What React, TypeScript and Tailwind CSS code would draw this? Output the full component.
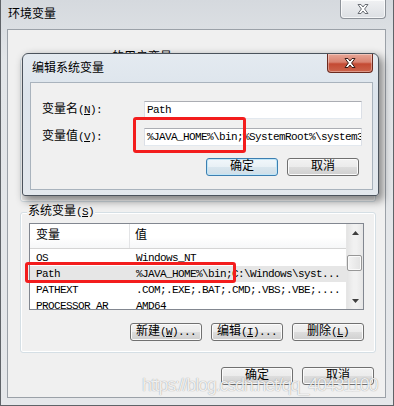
import type { ReactNode } from "react";

const UI = "font-['Liberation_Mono','Noto_Sans_CJK_SC',monospace]";

// ASCII part of SimSun-like text: 6px per char
function A({ children }: { children: ReactNode }) {
  return <span className="text-[11px] tracking-[-0.6px]">{children}</span>;
}

function XGlyph({ stroke }: { stroke: string }) {
  return (
    <svg width="12" height="10" viewBox="0 0 12 10">
      <polygon
        points="1,0.5 4,0.5 6,3 8,0.5 11,0.5 7.6,5 11,9.5 8,9.5 6,7 4,9.5 1,9.5 4.4,5"
        fill="#ffffff"
        stroke={stroke}
        strokeWidth="1"
        strokeLinejoin="round"
      />
    </svg>
  );
}

function CloseButton({ active }: { active?: boolean }) {
  return (
    <div
      className={`flex h-[19px] w-[46px] items-center justify-center rounded-b-[4px] border border-t-0 ${
        active
          ? "border-[#6b2a1f] bg-[linear-gradient(#e7a696_0%,#d98270_45%,#c44a33_55%,#cc644c_100%)] shadow-[inset_0_0_0_1px_rgba(255,255,255,0.35)]"
          : "border-[#8d9299] bg-[linear-gradient(#f0f1f3,#dcdfe3)] shadow-[inset_0_0_0_1px_rgba(255,255,255,0.7)]"
      }`}
    >
      <XGlyph stroke={active ? "#3b1d18" : "#6a6e74"} />
    </div>
  );
}

function Btn({ children, primary }: { children: ReactNode; primary?: boolean }) {
  return (
    <div
      className={`flex h-[18px] w-[72px] items-center justify-center rounded-[3px] border leading-none ${
        primary
          ? "border-[#3c7fb1] bg-[linear-gradient(#f1f7fb_0%,#e8f0f5_50%,#d9e6ee_51%,#cfdee8_100%)] shadow-[inset_0_0_0_1px_#bfe6f8]"
          : "border-[#707070] bg-[linear-gradient(#f2f2f2_0%,#ebebeb_50%,#dddddd_51%,#cfcfcf_100%)] shadow-[inset_0_0_0_1px_#fbfbfb]"
      }`}
    >
      {children}
    </div>
  );
}

function Input({ value }: { value: string }) {
  return (
    <div className="flex h-[18px] w-[218px] items-center overflow-hidden whitespace-nowrap border border-[#abadb3] border-x-[#dbdfe6] border-b-[#e3e9ef] bg-white pl-[2px] leading-none">
      <A>{value}</A>
    </div>
  );
}

function Arrow({ down }: { down?: boolean }) {
  return (
    <div className="flex h-[17px] w-full shrink-0 items-center justify-center">
      <svg width="7" height="4" viewBox="0 0 7 4">
        <polygon points={down ? "0,0 7,0 3.5,4" : "0,4 7,4 3.5,0"} fill="#3e3e3e" />
      </svg>
    </div>
  );
}

const rows = [
  { name: "OS", value: "Windows_NT" },
  { name: "Path", value: "%JAVA_HOME%\\bin;C:\\Windows\\syst...", selected: true },
  { name: "PATHEXT", value: ".COM;.EXE;.BAT;.CMD;.VBS;.VBE;...." },
  { name: "PROCESSOR_AR", value: "AMD64" },
];

function ListView() {
  return (
    <div className="flex h-[87px] w-[335px] border border-[#828790] bg-white">
      <div className="flex min-w-0 flex-1 flex-col overflow-hidden">
        <div className="flex h-[25px] shrink-0 border-b border-[#d5d5d5] bg-[linear-gradient(#ffffff,#ffffff_55%,#f6f7f8)] leading-none">
          <div className="flex w-[100px] items-center border-r border-[#e3e4e6] pl-[6px]">变量</div>
          <div className="flex items-center pl-[5px]">值</div>
        </div>
        <div className="mt-[1px] flex flex-col">
          {rows.map((r) => (
            <div
              key={r.name}
              className={`flex h-[16px] shrink-0 items-center whitespace-nowrap leading-none ${
                r.selected ? "bg-[#e6e6e6]" : ""
              }`}
            >
              <div className="w-[100px] pl-[6px]">
                <A>{r.name}</A>
              </div>
              <div className="pl-[6px]">
                <A>{r.value}</A>
              </div>
            </div>
          ))}
        </div>
      </div>
      <div className="flex w-[17px] shrink-0 flex-col border-l border-[#e6e6e6] bg-[linear-gradient(90deg,#e4e4e4,#f1f1f1_40%,#f1f1f1_60%,#e6e6e6)]">
        <Arrow />
        <div className="mt-[14px] h-[16px] w-[15px] rounded-[2px] border border-[#979797] bg-[linear-gradient(90deg,#f4f4f4,#e2e2e2)] shadow-[inset_0_0_0_1px_#fafafa]" />
        <div className="flex-1" />
        <Arrow down />
      </div>
    </div>
  );
}

function GroupBox({ label, className, children }: { label: ReactNode; className: string; children?: ReactNode }) {
  return (
    <div className={`relative rounded-[3px] border border-[#d5dfe5] shadow-[inset_0_0_0_1px_#ffffff] ${className}`}>
      <span className="absolute -top-[9px] left-[6px] bg-[#f0f0f0] px-[1px] leading-[16px]">{label}</span>
      {children}
    </div>
  );
}

export default function App() {
  return (
    <div
      className={`relative flex h-[406px] w-[394px] flex-col overflow-hidden border-x border-b border-[#5f6368] bg-[linear-gradient(#d5d9de,#e2e5e8_60px,#e5e7ea)] text-[12px] text-black ${UI}`}
    >
      <div className="flex h-[29px] shrink-0 items-start justify-between pl-[7px] pr-[7px]">
        <span className="mt-[7px] leading-[16px]">环境变量</span>
        <CloseButton />
      </div>

      <div className="mb-[7px] ml-[6px] mr-[7px] flex flex-1 flex-col border border-[#9ba1a8] bg-[#f0f0f0]">
        <GroupBox
          className="ml-[12px] mt-[28px] h-[144px] w-[356px]"
          label={
            <>
              <A>Administrator </A>的用户变量<A>(<u>U</u>)</A>
            </>
          }
        />
        <GroupBox
          className="ml-[12px] mt-[10px] flex h-[141px] w-[356px] flex-col pl-[8px] pr-[11px] pt-[10px]"
          label={
            <>
              系统变量<A>(<u>S</u>)</A>
            </>
          }
        >
          <ListView />
          <div className="mt-[13px] flex justify-end gap-[9px]">
            <Btn>
              新建<A>(<u>W</u>)...</A>
            </Btn>
            <Btn>
              编辑<A>(<u>I</u>)...</A>
            </Btn>
            <Btn>
              删除<A>(<u>L</u>)</A>
            </Btn>
          </div>
        </GroupBox>
        <div className="mt-[14px] flex justify-end gap-[9px] pr-[11px]">
          <Btn>确定</Btn>
          <Btn>取消</Btn>
        </div>
      </div>

      {/* edit dialog on top */}
      <div className="absolute left-[21px] top-[53px] flex h-[143px] w-[357px] flex-col rounded-t-[6px] rounded-b-[3px] border border-[#4b535c] bg-[linear-gradient(#e4eaf0,#dce4ec_40px,#e3e8ed)] shadow-[3px_4px_9px_1px_rgba(0,0,0,0.45)]">
        <div className="flex h-[28px] shrink-0 items-start justify-between pl-[9px] pr-[5px]">
          <span className="mt-[7px] leading-[16px]">编辑系统变量</span>
          <CloseButton active />
        </div>
        <div className="mb-[5px] ml-[7px] mr-[5px] flex h-[108px] flex-col border border-[#a9b3bd] bg-[#f0f0f0]">
          <div className="mt-[18px] flex items-center pl-[11px]">
            <span className="w-[102px] leading-none">
              变量名<A>(<u>N</u>):</A>
            </span>
            <Input value="Path" />
          </div>
          <div className="mt-[9px] flex items-center pl-[11px]">
            <span className="w-[102px] leading-none">
              变量值<A>(<u>V</u>):</A>
            </span>
            <Input value="%JAVA_HOME%\bin;%SystemRoot%\system32" />
          </div>
          <div className="mt-[12px] flex justify-end gap-[9px] pr-[13px]">
            <Btn primary>确定</Btn>
            <Btn>取消</Btn>
          </div>
        </div>
      </div>

      {/* red annotation boxes */}
      <div className="absolute left-[132px] top-[117px] h-[36px] w-[113px] rounded-[3px] border-[3px] border-[#f31d1d]" />
      <div className="absolute left-[24px] top-[262px] h-[21px] w-[211px] rounded-[3px] border-[3px] border-[#f31d1d]" />

      {/* watermark */}
      <div className="absolute left-[141px] top-[375px] whitespace-nowrap font-['Liberation_Sans',sans-serif] text-[18px] leading-[20px] tracking-[-1.2px] text-white/85 [text-shadow:0_0_1px_rgba(0,0,0,0.45)]">
        https://blog.csdn.net/qq_40431100
      </div>
    </div>
  );
}
